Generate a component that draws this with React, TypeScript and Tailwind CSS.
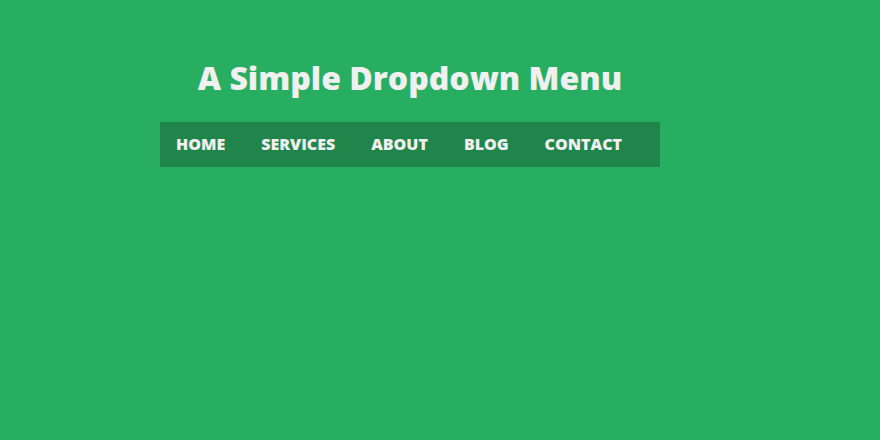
import React, { useState } from 'react';

const menu = [
  { label: 'Home', children: [] },
  { label: 'Services', children: ['Design', 'Development'] },
  { label: 'About', children: [] },
  { label: 'Blog', children: ['News', 'Articles'] },
  { label: 'Contact', children: [] },
];

const App: React.FC = () => {
  const [open, setOpen] = useState<string | null>(null);

  return (
    <div className="min-h-screen bg-[#27ae60] pt-14 px-40 text-[#f0f0f0] font-['Open_Sans',sans-serif]">
      <div className="w-full max-w-[500px]">
        <h1 className="text-center text-[32px] leading-[44px] font-extrabold whitespace-nowrap">A Simple Dropdown Menu</h1>

        <nav className="mt-[22px] bg-[#20854b]">
          <ul className="flex gap-1">
            {menu.map(item => (
              <li key={item.label} className="relative"
                onMouseEnter={() => setOpen(item.label)} onMouseLeave={() => setOpen(null)}>
                <a href="#" className="block px-4 py-3 text-base leading-[21px] font-extrabold uppercase hover:bg-[#1b7340]">{item.label}</a>
                {open === item.label && item.children.length > 0 && (
                  <ul className="absolute left-0 top-full bg-[#20854b]">
                    {item.children.map(child => (
                      <li key={child}>
                        <a href="#" className="block px-4 py-2 text-sm hover:bg-[#1b7340]">{child}</a>
                      </li>
                    ))}
                  </ul>
                )}
              </li>
            ))}
          </ul>
        </nav>
      </div>
    </div>
  );
};

export default App;
